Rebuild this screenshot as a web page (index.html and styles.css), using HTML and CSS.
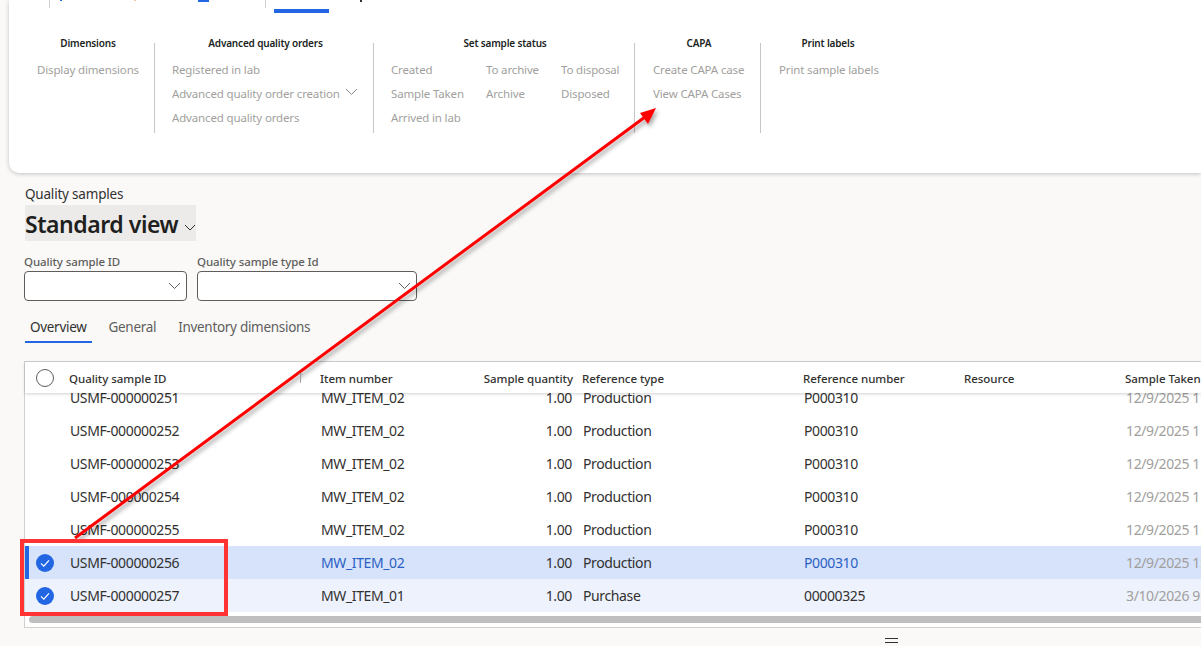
FILE: index.html
```html
<!DOCTYPE html>
<html lang="en">

<head>
  <meta charset="UTF-8" />
  <title>Quality samples</title>
  <link rel="stylesheet" href="styles.css">
</head>

<body>
  <div class="ribbon">
    <div class="tabstrip">
      <div class="tabstrip-cell tab-a"><span class="bit bit-blue"></span><span class="bit bit-orange"></span><span class="bit bit-wide"></span></div>
      <div class="tabstrip-cell tab-b"><span class="tab-active"></span><span class="bit bit-dark"></span></div>
    </div>
    <div class="groups">
      <div class="group group-dim">
        <h4>Dimensions</h4>
        <div class="col">
          <span>Display dimensions</span>
        </div>
      </div>
      <div class="group group-adv">
        <h4>Advanced quality orders</h4>
        <div class="col">
          <span>Registered in lab</span>
          <span class="has-chevron">Advanced quality order creation
            <svg class="chev" width="13" height="8" viewBox="0 0 13 8"><path d="M1 1l5.5 5.5L12 1" fill="none" stroke="#8a8886" /></svg>
          </span>
          <span>Advanced quality orders</span>
        </div>
      </div>
      <div class="group group-status">
        <h4>Set sample status</h4>
        <div class="cols">
          <div class="col">
            <span>Created</span>
            <span>Sample Taken</span>
            <span>Arrived in lab</span>
          </div>
          <div class="col">
            <span>To archive</span>
            <span>Archive</span>
          </div>
          <div class="col">
            <span>To disposal</span>
            <span>Disposed</span>
          </div>
        </div>
      </div>
      <div class="group group-capa">
        <h4>CAPA</h4>
        <div class="col">
          <span>Create CAPA case</span>
          <span>View CAPA Cases</span>
        </div>
      </div>
      <div class="group group-print">
        <h4>Print labels</h4>
        <div class="col">
          <span>Print sample labels</span>
        </div>
      </div>
    </div>
  </div>

  <div class="content">
    <div class="crumb">Quality samples</div>
    <div class="view-name">Standard view
      <svg width="12" height="7" viewBox="0 0 12 7"><path d="M1 1l5 5 5-5" fill="none" stroke="#323130" /></svg>
    </div>

    <div class="filters">
      <div class="filter filter-id">
        <label>Quality sample ID</label>
        <div class="input">
          <svg width="13" height="8" viewBox="0 0 13 8"><path d="M1 1l5.5 5.5L12 1" fill="none" stroke="#605e5c" /></svg>
        </div>
      </div>
      <div class="filter filter-type">
        <label>Quality sample type Id</label>
        <div class="input">
          <svg width="13" height="8" viewBox="0 0 13 8"><path d="M1 1l5.5 5.5L12 1" fill="none" stroke="#605e5c" /></svg>
        </div>
      </div>
    </div>

    <div class="tabs">
      <span class="tab current">Overview</span>
      <span class="tab">General</span>
      <span class="tab">Inventory dimensions</span>
    </div>

    <div class="grid">
      <div class="row head">
        <div class="c-check"><span class="circle"></span></div>
        <div class="c-id">Quality sample ID
          <svg class="sort" width="5" height="11" viewBox="0 0 5 11"><path d="M2.5 11V1M.5 3l2-2 2 2" fill="none" stroke="#a19f9d" /></svg>
        </div>
        <div class="c-item">Item number</div>
        <div class="c-qty">Sample quantity</div>
        <div class="c-type">Reference type</div>
        <div class="c-ref">Reference number</div>
        <div class="c-res">Resource</div>
        <div class="c-date">Sample Taken</div>
      </div>
      <div class="rows">
        <div class="rows-inner">
          <div class="row">
            <div class="c-check"></div><div class="c-id">USMF-000000251</div><div class="c-item">MW_ITEM_02</div><div class="c-qty">1.00</div><div class="c-type">Production</div><div class="c-ref">P000310</div><div class="c-res"></div><div class="c-date">12/9/2025 1:00 PM</div>
          </div>
          <div class="row">
            <div class="c-check"></div><div class="c-id">USMF-000000252</div><div class="c-item">MW_ITEM_02</div><div class="c-qty">1.00</div><div class="c-type">Production</div><div class="c-ref">P000310</div><div class="c-res"></div><div class="c-date">12/9/2025 1:00 PM</div>
          </div>
          <div class="row">
            <div class="c-check"></div><div class="c-id">USMF-000000253</div><div class="c-item">MW_ITEM_02</div><div class="c-qty">1.00</div><div class="c-type">Production</div><div class="c-ref">P000310</div><div class="c-res"></div><div class="c-date">12/9/2025 1:00 PM</div>
          </div>
          <div class="row">
            <div class="c-check"></div><div class="c-id">USMF-000000254</div><div class="c-item">MW_ITEM_02</div><div class="c-qty">1.00</div><div class="c-type">Production</div><div class="c-ref">P000310</div><div class="c-res"></div><div class="c-date">12/9/2025 1:00 PM</div>
          </div>
          <div class="row">
            <div class="c-check"></div><div class="c-id">USMF-000000255</div><div class="c-item">MW_ITEM_02</div><div class="c-qty">1.00</div><div class="c-type">Production</div><div class="c-ref">P000310</div><div class="c-res"></div><div class="c-date">12/9/2025 1:00 PM</div>
          </div>
          <div class="row active">
            <div class="c-check"><svg width="18" height="18" viewBox="0 0 18 18"><circle cx="9" cy="9" r="9" fill="#2266e3" /><path d="M5 9.3l2.8 2.8L13 6.4" fill="none" stroke="#fff" stroke-width="1.2" /></svg></div>
            <div class="c-id">USMF-000000256</div><div class="c-item link">MW_ITEM_02</div><div class="c-qty">1.00</div><div class="c-type">Production</div><div class="c-ref link">P000310</div><div class="c-res"></div><div class="c-date">12/9/2025 1:00 PM</div>
          </div>
          <div class="row marked">
            <div class="c-check"><svg width="18" height="18" viewBox="0 0 18 18"><circle cx="9" cy="9" r="9" fill="#2266e3" /><path d="M5 9.3l2.8 2.8L13 6.4" fill="none" stroke="#fff" stroke-width="1.2" /></svg></div>
            <div class="c-id">USMF-000000257</div><div class="c-item">MW_ITEM_01</div><div class="c-qty">1.00</div><div class="c-type">Purchase</div><div class="c-ref">00000325</div><div class="c-res"></div><div class="c-date">3/10/2026 9:00 AM</div>
          </div>
        </div>
      </div>
      <div class="scrollbar"><div class="thumb"></div></div>
    </div>
    <div class="splitter"></div>
  </div>

  <!-- annotations drawn over the screenshot -->
  <svg class="markup" width="1201" height="646" viewBox="0 0 1201 646">
    <defs>
      <filter id="soft" x="-5%" y="-5%" width="110%" height="110%">
        <feDropShadow dx="2" dy="3" stdDeviation="2" flood-color="#000" flood-opacity="0.35" />
      </filter>
    </defs>
    <g filter="url(#soft)">
      <path d="M75 538L645 117" stroke="#f00" stroke-width="3" fill="none" />
      <path d="M656 108L640 113L648 124Z" fill="#f00" />
    </g>
    <rect x="22" y="541" width="204" height="73" fill="none" stroke="#ff3333" stroke-width="4" />
  </svg>
</body>

</html>
```

FILE: styles.css
```css
* {
  box-sizing: border-box;
}

html,
body {
  height: 100%;
}

body {
  margin: 0;
  background-color: #faf9f8;
  color: #323130;
  font-family: 'Noto Sans', 'Open Sans', sans-serif;
  font-size: 13px;
  position: relative;
  overflow: hidden;
}

.ribbon {
  margin-left: 9px;
  height: 173px;
  background: #fff;
  border-bottom-left-radius: 10px;
  box-shadow: 0 1px 4px rgba(0, 0, 0, 0.22);
}

.tabstrip {
  display: flex;
  height: 13px;
}

.tabstrip-cell {
  height: 8px;
  border-left: 1px solid #d2d0ce;
  display: flex;
}

.tab-a {
  margin-left: 40px;
  width: 216px;
}

.bit {
  height: 1px;
}

.bit-blue {
  width: 2px;
  margin-left: 10px;
  background: #2266e3;
}

.bit-orange {
  width: 2px;
  margin-left: 72px;
  background: #f0c8a8;
}

.bit-wide {
  width: 11px;
  margin-left: 62px;
  height: 2px;
  background: #2266e3;
}

.tab-b {
  width: 120px;
}

.tab-active {
  display: block;
  width: 55px;
  height: 4px;
  margin: 9px 0 0 8px;
  background: #2266e3;
}

.bit-dark {
  width: 2px;
  height: 2px;
  margin-left: 31px;
  background: #323130;
}

.groups {
  display: flex;
  padding-top: 30px;
  height: 120px;
  font-size: 11.5px;
  letter-spacing: -0.15px;
  color: #a19f9d;
}

.group {
  height: 90px;
  border-right: 1px solid #c8c6c4;
  text-align: left;
}

.group:last-child {
  border-right: none;
}

.group h4 {
  margin: -7px 0 8px;
  height: 14px;
  line-height: 14px;
  font-size: 10px;
  font-weight: 600;
  letter-spacing: -0.17px;
  color: #201f1e;
  text-align: center;
}

.col {
  display: flex;
  flex-direction: column;
}

.col span {
  height: 24px;
  line-height: 24px;
  white-space: nowrap;
}

.cols {
  display: flex;
}

.group-dim {
  width: 146px;
  padding-left: 28px;
}

.group-dim h4 {
  width: 102px;
}

.group-adv {
  width: 219px;
  padding-left: 17px;
}

.group-adv h4 {
  width: 187px;
}

.group-status {
  width: 261px;
  padding-left: 17px;
}

.group-status h4 {
  width: 228px;
}

.group-status .col:nth-child(1) {
  width: 95px;
}

.group-status .col:nth-child(2) {
  width: 75px;
}

.group-capa {
  width: 126px;
  padding-left: 18px;
}

.group-capa h4 {
  width: 92px;
}

.group-print {
  padding-left: 18px;
}

.group-print h4 {
  width: 98px;
}

.has-chevron {
  display: flex;
  align-items: center;
  gap: 5px;
}

.chev {
  margin-top: -4px;
}

.content {
  padding: 13px 0 0 24px;
  display: flex;
  flex-direction: column;
}

.crumb {
  height: 16px;
  line-height: 16px;
  padding-left: 1px;
  font-size: 13.5px;
  letter-spacing: -0.2px;
}

.view-name {
  margin-top: 3px;
  margin-left: 1px;
  padding-top: 2px;
  width: 171px;
  height: 36px;
  background: #edebe9;
  display: flex;
  align-items: center;
  justify-content: space-between;
  font-size: 23px;
  font-weight: 600;
  letter-spacing: -0.45px;
  color: #201f1e;
  white-space: nowrap;
}

.view-name svg {
  margin-top: 6px;
}

.filters {
  display: flex;
  gap: 10px;
  margin-top: 13px;
}

.filter label {
  display: block;
  height: 17px;
  line-height: 16px;
  font-size: 11.5px;
  font-weight: 500;
  letter-spacing: -0.1px;
  color: #605e5c;
}

.input {
  height: 30px;
  border: 1px solid #605e5c;
  border-radius: 4px;
  background: #fff;
  display: flex;
  align-items: center;
  justify-content: flex-end;
  padding-right: 5px;
}

.filter-id {
  width: 163px;
}

.filter-type {
  width: 220px;
}

.tabs {
  display: flex;
  margin-top: 16px;
  height: 26px;
  padding-left: 1px;
  font-size: 13.5px;
  letter-spacing: -0.3px;
  color: #605e5c;
}

.tab {
  padding: 0 5px;
  line-height: 20px;
  margin-right: 12px;
}

.tab.current {
  color: #323130;
  border-bottom: 2px solid #2266e3;
  height: 26px;
}

.grid {
  margin-top: 18px;
  height: 267px;
  background: #fff;
  border: 1px solid #d2d0ce;
  border-right: none;
  display: flex;
  flex-direction: column;
}

.row {
  display: grid;
  grid-template-columns: 44px 251px 163px 90px 230px 161px 161px 200px;
  height: 33px;
  align-items: center;
  white-space: nowrap;
  font-size: 14px;
  letter-spacing: -0.38px;
}

.head {
  height: 31px;
  flex: none;
  padding-top: 1px;
  font-size: 11.5px;
  font-weight: 500;
  letter-spacing: -0.03px;
  color: #323130;
  box-shadow: 0 1px 3px rgba(0, 0, 0, 0.18);
  position: relative;
  z-index: 1;
}

.rows {
  height: 219px;
  overflow: hidden;
  flex: none;
}

.rows-inner {
  margin-top: -12px;
}

.c-check {
  display: flex;
  justify-content: center;
  padding-right: 4px;
  height: 100%;
  align-items: center;
}

.circle {
  width: 18px;
  height: 18px;
  border: 1px solid #605e5c;
  border-radius: 50%;
}

.c-id {
  position: relative;
  padding-left: 1px;
}

.head .c-id {
  padding-left: 0;
}

.sort {
  position: absolute;
  left: 229px;
  top: 1px;
}

.c-item {
  padding-left: 1px;
}

.head .c-item {
  padding-left: 0;
}

.c-qty {
  text-align: right;
  padding-right: 1px;
  margin-left: -6px;
}

.head .c-qty {
  padding-right: 0;
}

.c-type {
  padding-left: 10px;
}

.head .c-type {
  padding-left: 9px;
}

.c-ref,
.c-res,
.c-date {
  padding-left: 1px;
}

.head .c-ref,
.head .c-res,
.head .c-date {
  padding-left: 0;
}

.c-date {
  color: #a19f9d;
}

.head .c-date {
  color: #323130;
}

.link {
  color: #2b60c4;
}

.active {
  background: #d6e3fa;
  box-shadow: inset 4px 0 0 #2266e3;
}

.marked {
  background: #edf2fc;
}

.scrollbar {
  flex: none;
  padding: 4px 0 0 4px;
}

.thumb {
  height: 7px;
  background: #bfbfbf;
  border-radius: 4px 0 0 4px;
}

.splitter {
  width: 13px;
  height: 5px;
  margin: 10px 0 0 861px;
  border-top: 1px solid #323130;
  border-bottom: 1px solid #323130;
}

.markup {
  position: absolute;
  left: 0;
  top: 0;
  pointer-events: none;
}
```
